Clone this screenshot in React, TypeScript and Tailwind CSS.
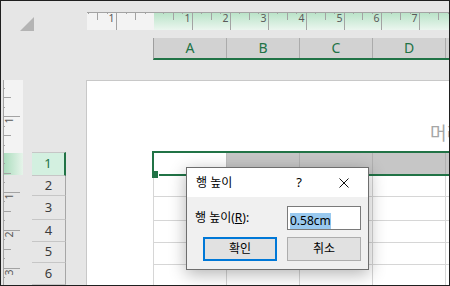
import React from "react";

const STEP = 9.475;

function HRuler() {
  const w = 362;
  const zero = 67;
  const marks: React.ReactNode[] = [];
  for (let i = -7; i <= 31; i++) {
    if (i === 0) continue;
    const x = Math.round(zero + i * STEP) + 0.5;
    if (x > w) break;
    const m = ((i % 4) + 4) % 4;
    const len = m === 0 ? 18 : m === 2 ? 8 : 2;
    marks.push(<line key={"t" + i} x1={x} x2={x} y1={0} y2={len} stroke="#a3a3a3" />);
    if (m === 0)
      marks.push(
        <text key={"n" + i} x={x - 2} y={9.5} textAnchor="end" fontSize={10.5} fill="#5a5a5a" fontFamily="Noto Sans, sans-serif">
          {Math.abs(i / 4)}
        </text>
      );
  }
  return (
    <svg width={w} height={18} className="block">
      <defs>
        <linearGradient id="hg" x1="0" y1="0" x2="0" y2="1">
          <stop offset="0" stopColor="#b7e2c6" />
          <stop offset="1" stopColor="#ebf6ef" />
        </linearGradient>
      </defs>
      <rect x={0} y={0} width={67} height={18} fill="#f3f3f3" />
      <rect x={67} y={0} width={w - 67} height={18} fill="url(#hg)" />
      <line x1={0} x2={w} y1={0.5} y2={0.5} stroke="#a3a3a3" />
      {marks}
    </svg>
  );
}

function VRuler() {
  const h = 205;
  const zero = 74;
  const marks: React.ReactNode[] = [];
  for (let i = -7; i <= 22; i++) {
    if (i === 0) continue;
    const y = Math.round(zero + i * STEP) + 0.5;
    if (y > h) break;
    const m = ((i % 4) + 4) % 4;
    const len = m === 0 ? 17 : m === 2 ? 8 : 2;
    marks.push(<line key={"t" + i} x1={0} x2={len} y1={y} y2={y} stroke="#a3a3a3" />);
    if (m === 0)
      marks.push(
        <text
          key={"n" + i}
          transform={`translate(9.5 ${y + 1}) rotate(-90)`}
          textAnchor="end"
          fontSize={10.5}
          fill="#5a5a5a"
          fontFamily="Noto Sans, sans-serif"
        >
          {Math.abs(i / 4)}
        </text>
      );
  }
  return (
    <svg width={20} height={h} className="block">
      <defs>
        <linearGradient id="vg" x1="0" y1="0" x2="1" y2="0">
          <stop offset="0" stopColor="#a9dcbc" />
          <stop offset="1" stopColor="#e6f4ea" />
        </linearGradient>
      </defs>
      <rect x={0} y={0} width={20} height={73} fill="#f3f3f3" />
      <rect x={0} y={73} width={20} height={22} fill="url(#vg)" />
      <line x1={0.5} x2={0.5} y1={0} y2={h} stroke="#a3a3a3" />
      {marks}
    </svg>
  );
}

const cols = ["A", "B", "C", "D"];
const rows = [
  { n: 2, h: "h-[21px]" },
  { n: 3, h: "h-[24px]" },
  { n: 4, h: "h-[22px]" },
  { n: 5, h: "h-[22px]" },
  { n: 6, h: "h-[22px]" },
];

export default function App() {
  return (
    <div className="relative h-[286px] w-[450px] overflow-hidden border border-[#1f1f1f] bg-[#e6e6e6] font-['Noto_Sans','Noto_Sans_CJK_KR',sans-serif]">
      {/* rulers + column headers */}
      <div className="flex h-[79px]">
        <div className="w-[86px] shrink-0 pl-[19px] pt-[16px]">
          <svg width="14" height="14" className="block">
            <polygon points="14,0 14,14 0,14" fill="#b4b4b4" />
          </svg>
        </div>
        <div className="flex min-w-0 flex-1 flex-col pt-[11px]">
          <HRuler />
          <div className="ml-[66px] mt-[8px] flex h-[22px] border-b-2 border-l border-b-[#217346] border-l-[#9e9e9e] bg-[#d2d2d2]">
            {cols.map((c) => (
              <div
                key={c}
                className="flex w-[73px] shrink-0 items-center justify-center border-r border-[#ababab] pb-[2px] text-[14px] text-[#217346]"
              >
                {c}
              </div>
            ))}
          </div>
        </div>
      </div>

      {/* left gutter + page */}
      <div className="flex h-[205px]">
        <div className="flex w-[85px] shrink-0">
          <div className="ml-[2px] w-[20px] shrink-0">
            <VRuler />
          </div>
          <div className="ml-[9px] flex w-[34px] shrink-0 flex-col pt-[72px]">
            <div className="flex h-[24px] items-center justify-center border-y border-r-2 border-y-[#c6c6c6] border-r-[#217346] bg-[#d3f0e0] text-[13px] text-[#217346]">
              1
            </div>
            {rows.map((r) => (
              <div
                key={r.n}
                className={`flex ${r.h} items-center justify-center border-b border-r border-b-[#c6c6c6] border-r-[#a6a6a6] text-[13px] text-[#3c3c3c]`}
              >
                {r.n}
              </div>
            ))}
          </div>
        </div>

        <div className="min-w-0 flex-1 overflow-hidden border-l border-t border-[#c8c8c8] bg-white">
          <div className="h-[71px] whitespace-nowrap pl-[343px] pt-[43px] text-[18px] leading-none text-[#a6a6a6]">
            머리글 추가
          </div>
          <div className="ml-[66px] flex flex-col border-l border-[#d6d6d6]">
            <div className="flex h-[24px] border-b border-[#d6d6d6]">
              <div className="w-[73px] shrink-0 border-r border-[#bdbdbd] bg-white" />
              <div className="w-[73px] shrink-0 border-r border-[#b1b1b1] bg-[#c6c6c6]" />
              <div className="w-[73px] shrink-0 border-r border-[#b1b1b1] bg-[#c6c6c6]" />
              <div className="w-[73px] shrink-0 border-r border-[#b1b1b1] bg-[#c6c6c6]" />
              <div className="flex-1 bg-[#c6c6c6]" />
            </div>
            {rows.map((r) => (
              <div key={r.n} className={`flex ${r.h} border-b border-[#d6d6d6]`}>
                {cols.map((c) => (
                  <div key={c} className="w-[73px] shrink-0 border-r border-[#d6d6d6]" />
                ))}
              </div>
            ))}
          </div>
        </div>
      </div>

      {/* selection of row 1 */}
      <div className="pointer-events-none absolute left-[151px] top-[150px] h-[25px] w-[320px] border-2 border-r-0 border-[#217346]" />
      <div className="absolute left-[151px] top-[170px] h-[7px] w-[7px] border-r border-white bg-[#217346]" />

      {/* row height dialog */}
      <div className="absolute left-[185px] top-[166px] flex h-[103px] w-[183px] flex-col border border-[#6e6e6e] bg-white text-black shadow-[0_4px_16px_rgba(0,0,0,0.3)]">
        <div className="flex h-[29px] shrink-0 items-center pl-[9px] pr-[16px] text-[12px]">
          <span className="flex-1">행 높이</span>
          <span className="w-[16px] text-center text-[13px]">?</span>
          <span className="ml-[29px] flex w-[16px] justify-center">
            <svg width="10" height="10" className="block">
              <path d="M0.5 0.5 L9.5 9.5 M9.5 0.5 L0.5 9.5" stroke="#111" strokeWidth="1" />
            </svg>
          </span>
        </div>
        <div className="flex flex-1 flex-col bg-[#f0f0f0] pt-[9px]">
          <div className="flex items-center">
            <label className="w-[100px] shrink-0 pl-[8px] text-[12px]">
              행 높이(<span className="underline">R</span>):
            </label>
            <div className="h-[24px] w-[74px] shrink-0 border border-[#7a7a7a] bg-white pl-[2px]">
              <span className="inline-block h-[16px] bg-[#99c9ef] text-[12px] leading-[16px]">0.58cm</span>
            </div>
          </div>
          <div className="mt-[7px] flex">
            <button className="ml-[16px] h-[24px] w-[74px] border-2 border-[#0078d7] bg-[#e1e1e1] text-[12px]">
              확인
            </button>
            <button className="ml-[10px] h-[24px] w-[74px] border border-[#adadad] bg-[#e1e1e1] text-[12px]">
              취소
            </button>
          </div>
        </div>
      </div>
    </div>
  );
}
